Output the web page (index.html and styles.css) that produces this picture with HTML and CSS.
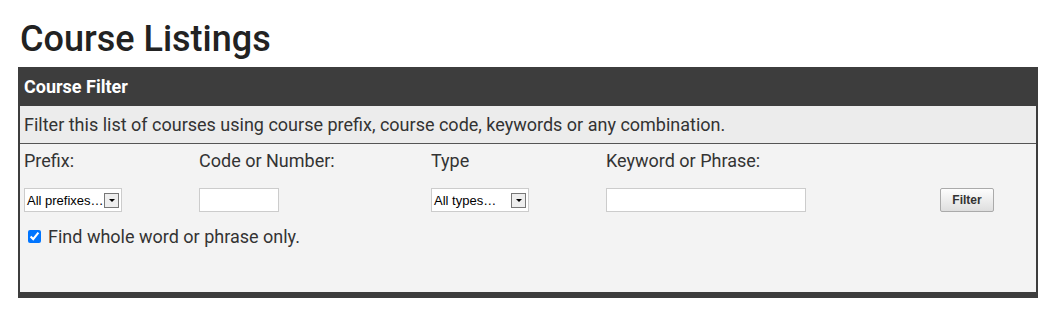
FILE: index.html
```html
<!DOCTYPE html>
<html>
  <head>
    <title>Course Listings</title>
    <link rel="stylesheet" href="styles.css">
  </head>
  <body>
    <h1 class="page-title">Course Listings</h1>
    <div class="filter-panel">
      <div class="filter-head">Course Filter</div>
      <div class="filter-desc">Filter this list of courses using course prefix, course code, keywords or any combination.</div>
      <form class="filter-body">
        <div class="filter-grid">
          <label class="field-label">Prefix:</label>
          <label class="field-label">Code or Number:</label>
          <label class="field-label">Type</label>
          <label class="field-label">Keyword or Phrase:</label>
          <span></span>

          <div class="fake-select prefix-select">
            <span class="fake-select-text">All prefixes…</span>
            <span class="fake-select-btn"><span class="arrow"></span></span>
          </div>
          <input class="text-input code-input" type="text">
          <div class="fake-select type-select">
            <span class="fake-select-text">All types…</span>
            <span class="fake-select-btn"><span class="arrow"></span></span>
          </div>
          <input class="text-input keyword-input" type="text">
          <button type="button" class="filter-btn">Filter</button>
        </div>
        <label class="check-row">
          <input type="checkbox" checked>
          <span>Find whole word or phrase only.</span>
        </label>
      </form>
    </div>
  </body>
</html>
```

FILE: styles.css
```css
body {
  margin: 0;
  padding: 0 11px 0 18px;
  font-family: Roboto, 'Liberation Sans', sans-serif;
  color: #333;
  background: #fff;
}

.page-title {
  margin: 0;
  padding: 17px 0 0 2px;
  height: 67px;
  box-sizing: border-box;
  font-size: 36px;
  font-weight: 500;
  line-height: 44px;
  color: #222;
}

.filter-panel {
  border-left: 2px solid #3d3d3d;
  border-right: 2px solid #3d3d3d;
  border-bottom: 6px solid #3d3d3d;
  background: #f3f3f3;
}

.filter-head {
  background: #3d3d3d;
  color: #fff;
  font-weight: 700;
  font-size: 18px;
  height: 39px;
  line-height: 39px;
  padding-left: 4px;
}

.filter-desc {
  background: #ececec;
  border-bottom: 1px solid #555;
  height: 37px;
  line-height: 37px;
  padding-left: 4px;
  font-size: 18px;
}

.filter-body {
  height: 148px;
  padding: 6px 0 0 4px;
  box-sizing: border-box;
  margin: 0;
}

.filter-grid {
  display: grid;
  grid-template-columns: 175px 232px 175px 334px auto;
  grid-template-rows: 21px 24px;
  row-gap: 17px;
  align-items: start;
}

.field-label {
  font-size: 18px;
  line-height: 21px;
  color: #333;
}

.fake-select {
  display: flex;
  align-items: center;
  justify-content: space-between;
  height: 24px;
  box-sizing: border-box;
  border: 1px solid #ccc;
  background: #fff;
  padding: 0 2px 0 2px;
  font-family: 'Liberation Sans', Arial, sans-serif;
  font-size: 13px;
  color: #000;
}

.prefix-select {
  width: 98px;
}

.type-select {
  width: 98px;
}

.fake-select-btn {
  width: 15px;
  height: 15px;
  box-sizing: border-box;
  border: 1px solid #777;
  background: #eee;
  display: flex;
  align-items: center;
  justify-content: center;
}

.arrow {
  width: 0;
  height: 0;
  border-left: 3px solid transparent;
  border-right: 3px solid transparent;
  border-top: 3px solid #000;
}

.text-input {
  height: 24px;
  box-sizing: border-box;
  border: 1px solid #ccc;
  background: #fff;
  margin: 0;
  padding: 0 3px;
}

.code-input {
  width: 80px;
}

.keyword-input {
  width: 200px;
}

.filter-btn {
  width: 54px;
  height: 24px;
  margin: 0;
  padding: 0;
  border: 1px solid #aaa;
  border-radius: 2px;
  background: linear-gradient(#fdfdfd, #dedede);
  font-family: 'Liberation Sans', Arial, sans-serif;
  font-size: 12px;
  font-weight: 700;
  color: #333;
}

.check-row {
  display: flex;
  align-items: center;
  margin-top: 14px;
  font-size: 18px;
  line-height: 21px;
  color: #333;
}

.check-row input {
  width: 13px;
  height: 13px;
  margin: 0 7px 0 4px;
}
```
